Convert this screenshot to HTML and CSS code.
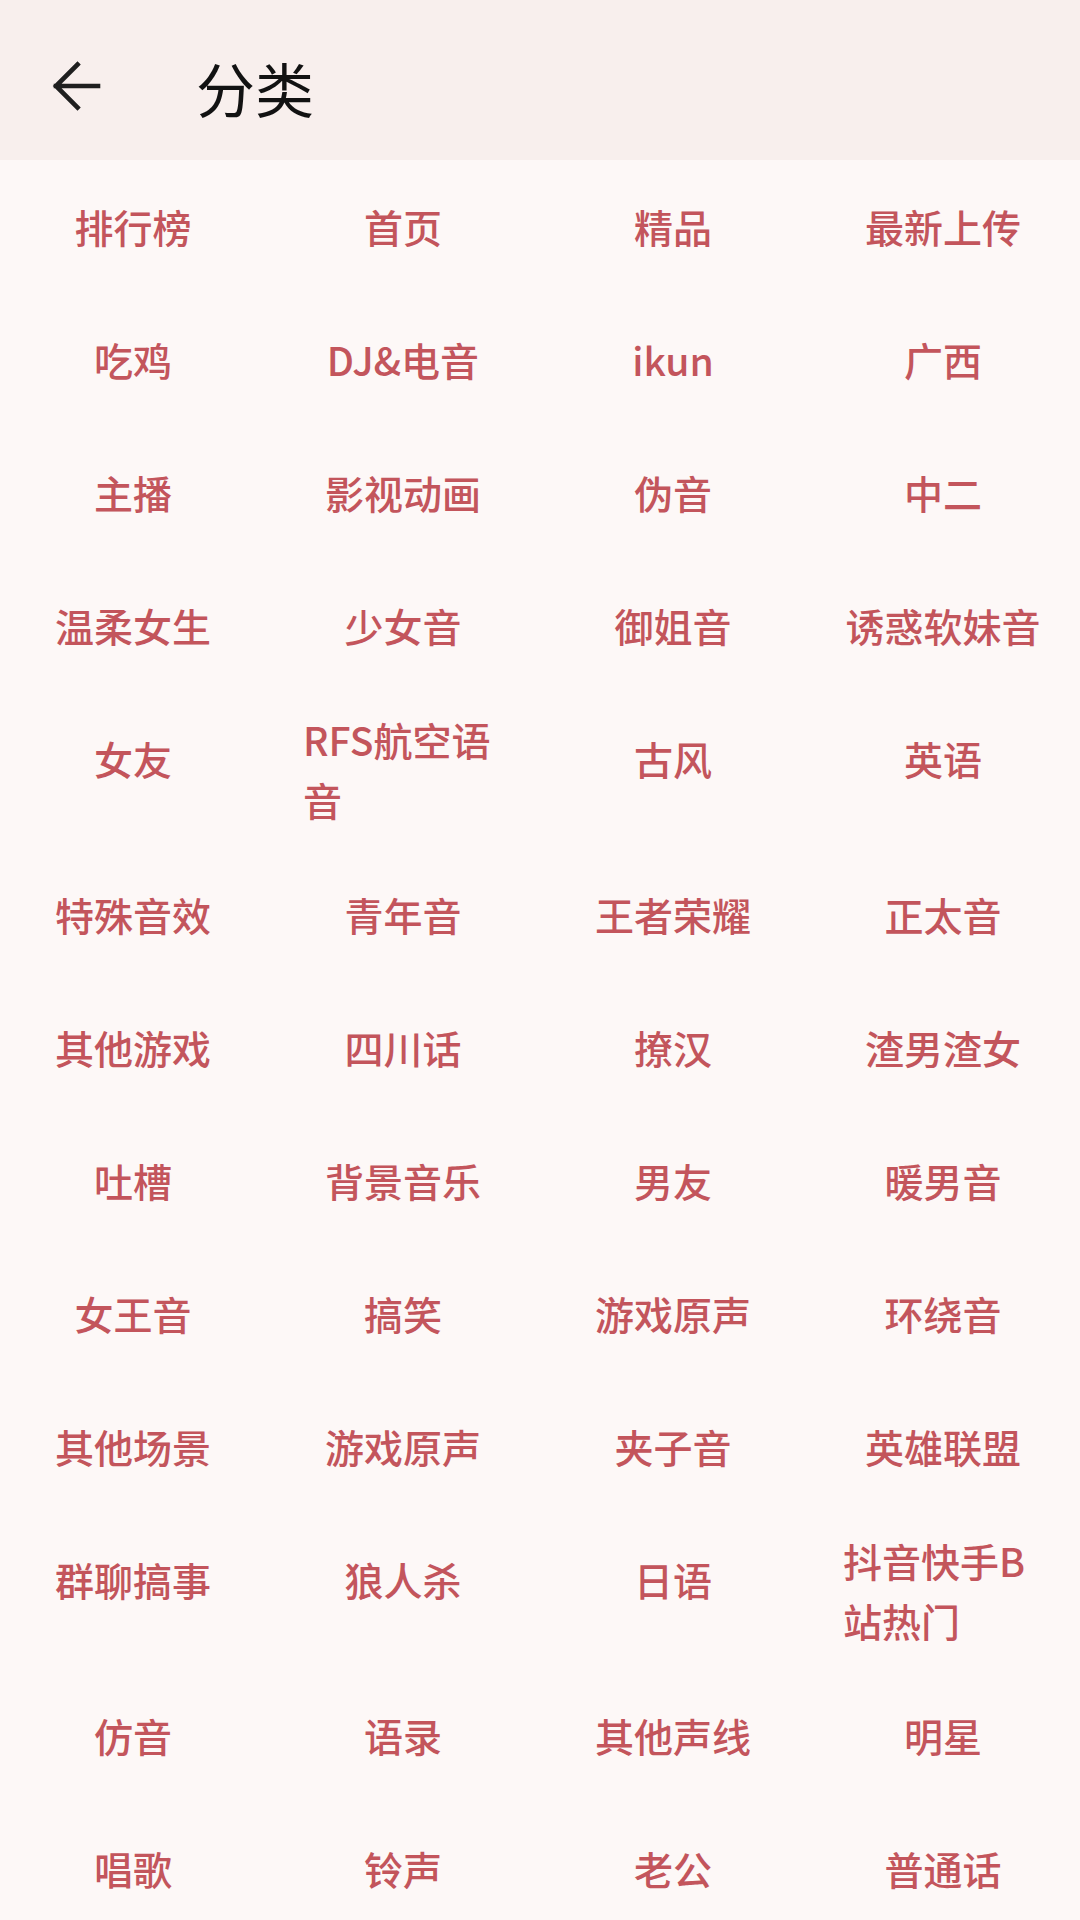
FILE: index.html
```html
<!DOCTYPE html>
<html lang="zh-CN">
<head>
<meta charset="utf-8">
<title>分类</title>
<link rel="stylesheet" href="styles.css">
</head>
<body>
<header class="topbar">
  <svg class="back" width="50" height="50" viewBox="0 0 50 50" aria-hidden="true">
    <path d="M47 25H5M26.5 3.5L5 25L26.5 46.5" fill="none" stroke="#1f1f1f" stroke-width="4.6" stroke-linecap="square" stroke-linejoin="miter"/>
  </svg>
  <h1 class="title">分类</h1>
</header>
<main class="grid">
  <div class="cell"><div class="label">排行榜</div></div>
  <div class="cell"><div class="label">首页</div></div>
  <div class="cell"><div class="label">精品</div></div>
  <div class="cell"><div class="label">最新上传</div></div>

  <div class="cell"><div class="label">吃鸡</div></div>
  <div class="cell"><div class="label">DJ&amp;电音</div></div>
  <div class="cell"><div class="label">ikun</div></div>
  <div class="cell"><div class="label">广西</div></div>

  <div class="cell"><div class="label">主播</div></div>
  <div class="cell"><div class="label">影视动画</div></div>
  <div class="cell"><div class="label">伪音</div></div>
  <div class="cell"><div class="label">中二</div></div>

  <div class="cell"><div class="label">温柔女生</div></div>
  <div class="cell"><div class="label">少女音</div></div>
  <div class="cell"><div class="label">御姐音</div></div>
  <div class="cell"><div class="label">诱惑软妹音</div></div>

  <div class="cell"><div class="label">女友</div></div>
  <div class="cell"><div class="label">RFS航空语音</div></div>
  <div class="cell"><div class="label">古风</div></div>
  <div class="cell"><div class="label">英语</div></div>

  <div class="cell"><div class="label">特殊音效</div></div>
  <div class="cell"><div class="label">青年音</div></div>
  <div class="cell"><div class="label">王者荣耀</div></div>
  <div class="cell"><div class="label">正太音</div></div>

  <div class="cell"><div class="label">其他游戏</div></div>
  <div class="cell"><div class="label">四川话</div></div>
  <div class="cell"><div class="label">撩汉</div></div>
  <div class="cell"><div class="label">渣男渣女</div></div>

  <div class="cell"><div class="label">吐槽</div></div>
  <div class="cell"><div class="label">背景音乐</div></div>
  <div class="cell"><div class="label">男友</div></div>
  <div class="cell"><div class="label">暖男音</div></div>

  <div class="cell"><div class="label">女王音</div></div>
  <div class="cell"><div class="label">搞笑</div></div>
  <div class="cell"><div class="label">游戏原声</div></div>
  <div class="cell"><div class="label">环绕音</div></div>

  <div class="cell"><div class="label">其他场景</div></div>
  <div class="cell"><div class="label">游戏原声</div></div>
  <div class="cell"><div class="label">夹子音</div></div>
  <div class="cell"><div class="label">英雄联盟</div></div>

  <div class="cell"><div class="label">群聊搞事</div></div>
  <div class="cell"><div class="label">狼人杀</div></div>
  <div class="cell"><div class="label">日语</div></div>
  <div class="cell"><div class="label">抖音快手B站热门</div></div>

  <div class="cell"><div class="label">仿音</div></div>
  <div class="cell"><div class="label">语录</div></div>
  <div class="cell"><div class="label">其他声线</div></div>
  <div class="cell"><div class="label">明星</div></div>

  <div class="cell"><div class="label">唱歌</div></div>
  <div class="cell"><div class="label">铃声</div></div>
  <div class="cell"><div class="label">老公</div></div>
  <div class="cell"><div class="label">普通话</div></div>
</main>
</body>
</html>
```

FILE: styles.css
```css
html, body {
  margin: 0;
  padding: 0;
}

body {
  width: 1080px;
  height: 1920px;
  overflow: hidden;
  background: #fdf8f7;
  font-family: "Noto Sans CJK SC", "Noto Sans", sans-serif;
}

.topbar {
  height: 160px;
  background: #f8efed;
  display: flex;
  align-items: center;
  box-sizing: border-box;
  padding-left: 51px;
}

.back {
  display: block;
  flex: none;
  margin-top: 11px;
}

.title {
  margin: 0 0 0 95px;
  font-size: 59px;
  font-weight: 400;
  color: #121212;
  line-height: 1;
  padding-top: 14px;
}

.grid {
  display: grid;
  grid-template-columns: repeat(4, 270px);
  margin-left: -2px;
  margin-top: -1px;
  align-items: start;
}

.cell {
  display: flex;
  justify-content: center;
  padding: 16.5px 0;
}

.label {
  display: flex;
  align-items: center;
  box-sizing: border-box;
  min-height: 100px;
  max-width: 200px;
  padding: 1.5px 0;
  font-size: 39px;
  line-height: 60px;
  font-weight: 500;
  color: #c3555c;
}
```
